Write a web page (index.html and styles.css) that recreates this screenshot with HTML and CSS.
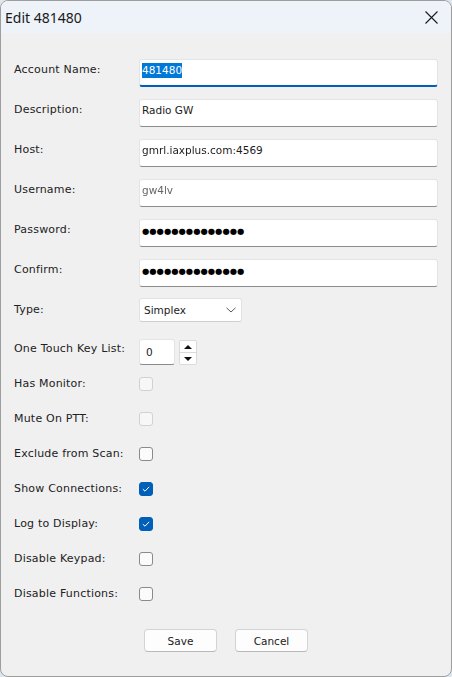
FILE: index.html
```html
<!DOCTYPE html>
<html lang="en">
<head>
    <meta charset="UTF-8">
    <meta name="viewport" content="width=device-width, initial-scale=1.0">
    <title>Edit 481480</title>
    <link rel="stylesheet" href="styles.css">
</head>
<body>
    <div class="window">
        <div class="titlebar">
            <span class="title">Edit 481480</span>
            <svg class="close" width="13" height="13" viewBox="0 0 13 13">
                <path d="M0.5 0.5 L12.5 12.5 M12.5 0.5 L0.5 12.5" stroke="#1a1a1a" stroke-width="1.1" fill="none"/>
            </svg>
        </div>

        <form class="dialog">
            <!-- Text fields -->
            <div class="row text-row">
                <span class="label">Account Name:</span>
                <div class="field focused"><span class="selected">481480</span></div>
            </div>
            <div class="row text-row">
                <span class="label">Description:</span>
                <div class="field">Radio GW</div>
            </div>
            <div class="row text-row">
                <span class="label">Host:</span>
                <div class="field"><span class="masked">gmrl.iaxplus.co</span>m:4569</div>
            </div>
            <div class="row text-row">
                <span class="label">Username:</span>
                <div class="field"><span class="masked light">gw4lv</span></div>
            </div>
            <div class="row text-row">
                <span class="label">Password:</span>
                <div class="field"><span class="dots">●●●●●●●●●●●●●●</span></div>
            </div>
            <div class="row text-row">
                <span class="label">Confirm:</span>
                <div class="field"><span class="dots">●●●●●●●●●●●●●●</span></div>
            </div>

            <!-- Type dropdown -->
            <div class="row select-row">
                <span class="label">Type:</span>
                <div class="select">
                    <span>Simplex</span>
                    <svg width="10" height="6" viewBox="0 0 10 6">
                        <path d="M0.5 0.8 L5 5 L9.5 0.8" stroke="#5a5a5a" stroke-width="1" fill="none"/>
                    </svg>
                </div>
            </div>

            <!-- Numeric spinner -->
            <div class="row spin-row">
                <span class="label">One Touch Key List:</span>
                <div class="spinner">
                    <div class="spin-field">0</div>
                    <div class="spin-buttons">
                        <div class="spin-btn"><span class="arrow-up"></span></div>
                        <div class="spin-btn"><span class="arrow-down"></span></div>
                    </div>
                </div>
            </div>

            <!-- Checkboxes -->
            <div class="row check-row">
                <span class="label">Has Monitor:</span>
                <span class="check disabled"></span>
            </div>
            <div class="row check-row">
                <span class="label">Mute On PTT:</span>
                <span class="check disabled"></span>
            </div>
            <div class="row check-row">
                <span class="label">Exclude from Scan:</span>
                <span class="check"></span>
            </div>
            <div class="row check-row">
                <span class="label">Show Connections:</span>
                <span class="check checked">
                    <svg width="8" height="6" viewBox="0 0 8 6"><path d="M0.8 3.2 L3 5.2 L7.2 0.8" stroke="#fff" stroke-width="1" fill="none"/></svg>
                </span>
            </div>
            <div class="row check-row">
                <span class="label">Log to Display:</span>
                <span class="check checked">
                    <svg width="8" height="6" viewBox="0 0 8 6"><path d="M0.8 3.2 L3 5.2 L7.2 0.8" stroke="#fff" stroke-width="1" fill="none"/></svg>
                </span>
            </div>
            <div class="row check-row">
                <span class="label">Disable Keypad:</span>
                <span class="check"></span>
            </div>
            <div class="row check-row">
                <span class="label">Disable Functions:</span>
                <span class="check"></span>
            </div>

            <div class="buttons">
                <button type="button">Save</button>
                <button type="button">Cancel</button>
            </div>
        </form>
    </div>
</body>
</html>
```

FILE: styles.css
```css
/* Base Styling */
body {
    margin: 0;
    background: #dfe6ee;
    font-family: 'DejaVu Sans', Verdana, sans-serif;
    font-size: 10.5px;
    color: #1b1b1b;
}

.window {
    width: 452px;
    height: 677px;
    box-sizing: border-box;
    border: 1px solid #9d9d9d;
    border-radius: 8px;
    background: #f0f0f0;
    overflow: hidden;
}

/* Title bar */
.titlebar {
    height: 32px;
    background: #eef3f9;
    display: flex;
    align-items: center;
    justify-content: space-between;
    padding: 0 13px 0 4px;
}

.title {
    font-family: 'Noto Sans', sans-serif;
    font-size: 14px;
    color: #1a1a1a;
}

/* Form rows */
.dialog {
    display: flex;
    flex-direction: column;
    padding: 26px 13px 0;
}

.row {
    display: grid;
    grid-template-columns: 125px 1fr;
}

.label {
    font-size: 11px;
    letter-spacing: 0.2px;
    line-height: 14px;
    padding-top: 4px;
    color: #222;
}

.text-row {
    height: 40px;
}

.select-row {
    height: 40px;
}

.spin-row {
    height: 27px;
}

.spin-row .label {
    padding-top: 3px;
}

.check-row {
    height: 35px;
    align-items: center;
}

.check-row .label {
    padding-top: 0;
}

/* Text fields */
.field {
    height: 28px;
    box-sizing: border-box;
    background: #fff;
    border: 1px solid #e4e4e4;
    border-bottom-color: #8b8b8b;
    border-radius: 3px;
    padding: 0 2px;
    line-height: 20px;
    white-space: nowrap;
    overflow: hidden;
}

.field.focused {
    border-bottom: 2px solid #005fb8;
}

.selected {
    display: inline-block;
    background: #0078d7;
    color: #fff;
    line-height: 15px;
    margin-top: 2px;
}

.masked {
    display: inline-block;
    filter: blur(0.5px);
}

.masked.light {
    color: #666;
}

.dots {
    font-size: 8.4px;
    color: #000;
}

/* Dropdown */
.select {
    width: 103px;
    height: 24px;
    box-sizing: border-box;
    background: #fff;
    border: 1px solid #e2e2e2;
    border-bottom-color: #cfcfcf;
    border-radius: 3px;
    display: flex;
    align-items: center;
    justify-content: space-between;
    padding: 0 5px 0 4px;
    margin-top: -1px;
}

/* Spinner */
.spinner {
    display: flex;
    gap: 4px;
    align-items: flex-start;
}

.spin-field {
    width: 36px;
    height: 26px;
    box-sizing: border-box;
    background: #fff;
    border: 1px solid #e4e4e4;
    border-bottom-color: #8b8b8b;
    border-radius: 3px;
    padding-left: 6px;
    line-height: 24px;
}

.spin-buttons {
    display: flex;
    flex-direction: column;
    width: 18px;
    margin-top: 1px;
    border: 1px solid #dadada;
    border-radius: 2px;
    box-sizing: border-box;
    background: #fff;
}

.spin-btn {
    height: 11px;
    display: flex;
    align-items: center;
    justify-content: center;
}

.spin-btn + .spin-btn {
    border-top: 1px solid #dadada;
}

.arrow-up {
    border-left: 4px solid transparent;
    border-right: 4px solid transparent;
    border-bottom: 4px solid #111;
}

.arrow-down {
    border-left: 4px solid transparent;
    border-right: 4px solid transparent;
    border-top: 4px solid #111;
}

/* Checkboxes */
.check {
    width: 14px;
    height: 14px;
    box-sizing: border-box;
    border: 1px solid #8a8a8a;
    border-radius: 3px;
    background: #fbfbfb;
    display: flex;
    align-items: center;
    justify-content: center;
}

.check.disabled {
    border-color: #d2d2d2;
    background: #f7f7f7;
}

.check.checked {
    border-color: #005fb8;
    background: #005fb8;
}

/* Buttons */
.buttons {
    display: flex;
    justify-content: center;
    gap: 18px;
    margin-top: 18px;
}

.buttons button {
    width: 73px;
    height: 23px;
    background: #fdfdfd;
    border: 1px solid #d3d3d3;
    border-bottom-color: #b9b9b9;
    border-radius: 4px;
    font-family: inherit;
    font-size: 10.5px;
    color: #1b1b1b;
    padding: 0;
}
```
